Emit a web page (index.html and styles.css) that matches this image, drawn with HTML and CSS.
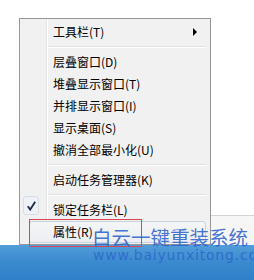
FILE: index.html
```html
<!DOCTYPE html>
<html lang="zh-CN">
<head>
<meta charset="utf-8">
<title>任务栏菜单</title>
<link rel="stylesheet" href="styles.css">
</head>
<body>
<div class="screen">
  <div class="desk">
    <div class="desk-top"></div>
    <div class="desk-strip"></div>
  </div>
  <div class="taskbar"></div>

  <div class="menu">
    <div class="item">工具栏(T)<span class="arrow"></span></div>
    <div class="sep"></div>
    <div class="item">层叠窗口(D)</div>
    <div class="item">堆叠显示窗口(T)</div>
    <div class="item">并排显示窗口(I)</div>
    <div class="item">显示桌面(S)</div>
    <div class="item">撤消全部最小化(U)</div>
    <div class="sep"></div>
    <div class="item">启动任务管理器(K)</div>
    <div class="sep"></div>
    <div class="item checked">
      <span class="checkbox">
        <svg width="9" height="10" viewBox="0 0 9 10"><path d="M0.8 5.2 L3.2 8.6 L8.2 0.8" fill="none" stroke="#1c2a4a" stroke-width="1.8" stroke-linejoin="miter"/></svg>
      </span>
      锁定任务栏(L)
    </div>
    <div class="item hover">属性(R)</div>
  </div>

  <div class="redbox"></div>

  <div class="watermark">
    <div class="wm-title">白云一键重装系统</div>
    <div class="wm-url">www.baiyunxitong.com</div>
  </div>
</div>
</body>
</html>
```

FILE: styles.css
```css
html, body {
  margin: 0;
  padding: 0;
  background: #ffffff;
}

.screen {
  position: relative;
  width: 254px;
  height: 280px;
  overflow: hidden;
  display: flex;
  flex-direction: column;
}

.desk {
  height: 245px;
  display: flex;
  flex-direction: column;
}

.desk-top {
  height: 215px;
  background: #ffffff;
}

.desk-strip {
  flex: 1;
  margin-left: 200px;
  border-top: 1px solid #d4d4d4;
  background: #f6f6f6;
}

.taskbar {
  flex: 1;
  background: linear-gradient(#529dd9, #3c8bd0 45%, #2f80c8);
}

.menu {
  position: absolute;
  left: 19px;
  top: 18px;
  width: 192px;
  box-sizing: border-box;
  border: 1px solid #979797;
  padding: 2px 2px 1px 2px;
  background: linear-gradient(to right, #f1f1f1 26px, #e2e3e3 26px, #e2e3e3 27px, #ffffff 27px, #ffffff 28px, #f1f1f1 28px);
  font-family: "Noto Sans CJK SC", "Microsoft YaHei", sans-serif;
  font-size: 12px;
  color: #000;
}

.item {
  position: relative;
  height: 22px;
  display: flex;
  align-items: center;
  padding-left: 31px;
  box-sizing: border-box;
  line-height: 1;
}

.arrow {
  position: absolute;
  right: 11px;
  top: 7px;
  width: 0;
  height: 0;
  border-left: 4px solid #000;
  border-top: 4px solid transparent;
  border-bottom: 4px solid transparent;
}

.sep {
  height: 8px;
  margin: 0 2px 0 26px;
  background: linear-gradient(#f1f1f1 3px, #e0e0e0 3px, #e0e0e0 4px, #ffffff 4px, #ffffff 5px, #f1f1f1 5px);
}

.checkbox {
  position: absolute;
  left: 1px;
  top: -3px;
  width: 16px;
  height: 19px;
  box-sizing: border-box;
  border: 1px solid #d6dde6;
  border-radius: 3px;
  background: #eef2f6;
  display: flex;
  align-items: center;
  justify-content: center;
}

.hover {
  margin: 0 2px 0 7px;
  padding-left: 23px;
  border: 1px solid #c9d3df;
  border-radius: 3px;
  background: linear-gradient(#f4f5f7, #eceef1);
}

.redbox {
  position: absolute;
  left: 29px;
  top: 219px;
  width: 113px;
  height: 28px;
  box-sizing: border-box;
  border: 1px solid #d9464f;
}

.watermark {
  position: absolute;
  left: 92px;
  top: 227px;
  width: 160px;
  display: flex;
  flex-direction: column;
  white-space: nowrap;
}

.wm-title {
  font-family: "Noto Sans CJK SC", sans-serif;
  font-size: 19.5px;
  line-height: 20px;
  color: rgba(45, 100, 205, 0.9);
}

.wm-url {
  margin-top: 1px;
  margin-left: 1px;
  font-family: "DejaVu Sans", sans-serif;
  font-size: 14px;
  line-height: 14px;
  letter-spacing: 0.8px;
  color: rgba(40, 95, 200, 0.75);
}
```
